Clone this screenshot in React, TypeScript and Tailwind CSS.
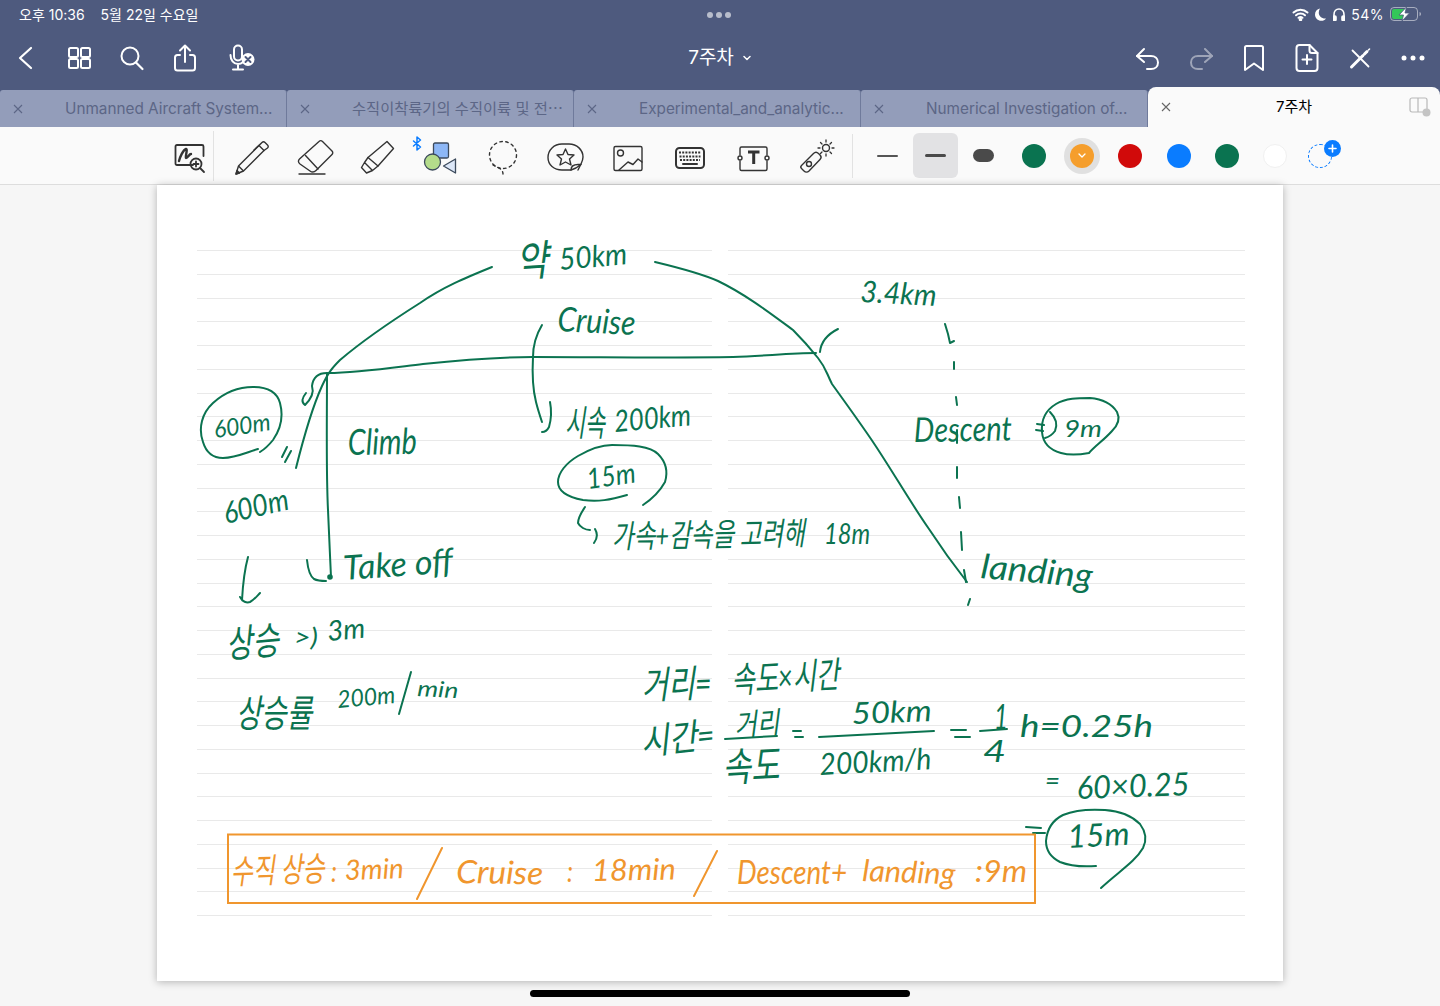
import React from 'react';

const GREEN = '#0b7350';
const ORANGE = '#f0962e';

type HandProps = {
  x: number;
  y: number;
  w: number;
  size: number;
  r?: number;
  children: string;
};

// one handwritten word on the note, x/y are the baseline start in screen coords
const Hand: React.FC<HandProps> = ({ x, y, w, size, r = 0, children }) => (
  <text
    x={x}
    y={y}
    textLength={w}
    lengthAdjust="spacingAndGlyphs"
    fontSize={size}
    transform={`rotate(${r} ${x} ${y})`}
  >
    {children}
  </text>
);

const inkStrokes = [
  // flight profile
  'M492 267C465 278 443 287 420 303C390 322 360 343 340 360C332 368 328 373 322 386C312 408 304 436 296 468',
  'M328 373C357 373 390 368 423 364C460 360 495 357 533 357C600 357 670 358 733 357C765 356 790 353 816 353',
  'M655 262C680 268 700 273 718 281C745 294 770 313 793 330C803 340 810 348 818 358C826 368 826 372 832 384C845 402 858 420 871 439C892 470 910 502 929 529C944 552 956 568 967 582',
  'M838 329C828 334 821 341 820 352',
  'M327 373C327 420 326 470 328 510C329 535 330 555 331 577',
  'M307 560C308 570 310 576 314 579C318 581 322 581 326 581',
  'M327 373C318 373 313 378 312 386C314 392 312 398 305 405C301 402 302 398 306 393',
  'M287 447L282 457M291 451L285 462',
  // circled times
  'M258 449C245 453 235 458 223 458C213 458 206 452 203 442C198 428 202 413 213 403C225 392 240 387 253 387C268 387 277 392 280 403C284 418 280 430 273 440C269 445 265 449 260 452',
  'M627 495C610 500 598 502 583 500C567 497 558 491 558 482C558 473 566 463 578 456C590 449 600 445 612 445C632 445 650 446 658 454C666 462 668 472 665 482C660 491 652 499 643 505',
  'M1089 453C1078 455 1068 455 1061 453C1050 450 1043 444 1042 432C1041 420 1046 410 1056 404C1066 398 1078 398 1090 398C1102 399 1112 404 1117 412C1120 418 1118 425 1112 431C1104 440 1095 446 1089 453',
  'M1050 412C1056 418 1058 424 1055 431C1052 435 1049 437 1045 438M1037 424L1044 425M1036 430L1043 431',
  'M1096 866C1082 867 1070 866 1060 862C1050 857 1046 850 1046 841C1047 829 1053 820 1063 815C1075 810 1090 809 1105 810C1120 811 1132 816 1140 824C1146 832 1147 840 1143 848C1135 862 1118 872 1101 888',
  'M1026 827L1041 828M1033 833L1045 833',
  // brackets and arrows
  'M542 325C536 335 533 345 533 357C532 375 533 390 536 402C538 410 540 416 542 422',
  'M550 402C552 412 551 420 549 427C547 431 545 432 542 432',
  'M585 507C581 513 578 518 578 523C580 527 585 530 590 530M595 529C598 534 597 539 594 543',
  'M248 557C245 568 243 582 242 600M240 597C242 602 247 603 250 602C254 600 257 596 260 593',
  'M945 324L948 334L950 343L954 341M954 362L954 369M956 397L957 405M957 430L957 443M957 467L957 478M959 497L960 508M961 532L962 550M964 570L966 582M970 599L968 605',
  // fractions
  'M411 672L399 714',
  'M725 739L777 736M819 737L934 731M980 731L1007 729',
  'M951 730L966 730M955 737L970 737M793 731L801 731M795 737L803 737',
];

const notes: Array<HandProps> = [
  { x: 517, y: 277, w: 32, size: 42, r: -4, children: '약' },
  { x: 560, y: 270, w: 68, size: 30, r: -5, children: '50km' },
  { x: 860, y: 302, w: 76, size: 30, r: 3, children: '3.4km' },
  { x: 557, y: 331, w: 78, size: 34, r: 3, children: 'Cruise' },
  { x: 348, y: 455, w: 69, size: 36, r: -1, children: 'Climb' },
  { x: 215, y: 438, w: 57, size: 24, r: -8, children: '600m' },
  { x: 226, y: 524, w: 66, size: 30, r: -13, children: '600m' },
  { x: 344, y: 580, w: 110, size: 34, r: -4, children: 'Take off' },
  { x: 565, y: 436, w: 40, size: 36, children: '시속' },
  { x: 615, y: 432, w: 77, size: 30, r: -5, children: '200km' },
  { x: 588, y: 489, w: 49, size: 28, r: -8, children: '15m' },
  { x: 612, y: 548, w: 193, size: 32, r: -1, children: '가속+감속을 고려해' },
  { x: 824, y: 544, w: 46, size: 28, children: '18m' },
  { x: 914, y: 442, w: 98, size: 34, r: -1, children: 'Descent' },
  { x: 1064, y: 437, w: 38, size: 24, children: '9m' },
  { x: 980, y: 578, w: 112, size: 34, r: 5, children: 'landing' },
  { x: 227, y: 658, w: 53, size: 38, r: -5, children: '상승' },
  { x: 294, y: 646, w: 24, size: 26, children: '>)' },
  { x: 328, y: 641, w: 38, size: 28, r: -5, children: '3m' },
  { x: 236, y: 727, w: 76, size: 38, children: '상승률' },
  { x: 338, y: 708, w: 58, size: 24, r: -5, children: '200m' },
  { x: 417, y: 696, w: 41, size: 22, r: 3, children: 'min' },
  { x: 642, y: 699, w: 70, size: 38, r: -2, children: '거리=' },
  { x: 732, y: 693, w: 108, size: 36, r: -3, children: '속도×시간' },
  { x: 642, y: 755, w: 74, size: 36, r: -6, children: '시간=' },
  { x: 735, y: 736, w: 45, size: 30, r: -4, children: '거리' },
  { x: 723, y: 782, w: 57, size: 40, r: -3, children: '속도' },
  { x: 852, y: 724, w: 80, size: 30, r: -2, children: '50km' },
  { x: 820, y: 775, w: 112, size: 30, r: -3, children: '200km/h' },
  { x: 994, y: 729, w: 14, size: 34, children: '1' },
  { x: 983, y: 762, w: 23, size: 30, children: '4' },
  { x: 1020, y: 737, w: 133, size: 30, children: 'h=0.25h' },
  { x: 1045, y: 790, w: 15, size: 26, children: '=' },
  { x: 1077, y: 799, w: 113, size: 32, r: -2, children: '60×0.25' },
  { x: 1068, y: 848, w: 62, size: 32, r: -3, children: '15m' },
];

const summary: Array<HandProps> = [
  { x: 231, y: 884, w: 94, size: 34, r: -2, children: '수직 상승' },
  { x: 331, y: 882, w: 6, size: 28, children: ':' },
  { x: 345, y: 880, w: 59, size: 28, r: -2, children: '3min' },
  { x: 456, y: 883, w: 87, size: 32, r: 1, children: 'Cruise' },
  { x: 567, y: 882, w: 6, size: 28, children: ':' },
  { x: 592, y: 881, w: 84, size: 30, r: -1, children: '18min' },
  { x: 737, y: 884, w: 110, size: 32, children: 'Descent+' },
  { x: 862, y: 881, w: 93, size: 30, r: 2, children: 'landing' },
  { x: 975, y: 882, w: 52, size: 30, children: ':9m' },
];

const Icon: React.FC<{ size?: number; className?: string; children: React.ReactNode }> = ({ size = 28, className = '', children }) => (
  <svg width={size} height={size} viewBox={`0 0 ${size} ${size}`} fill="none" stroke="currentColor" strokeWidth="2" strokeLinecap="round" strokeLinejoin="round" className={`overflow-visible ${className}`}>
    {children}
  </svg>
);

const navLeft = [
  <path key="back" d="M19 4L8 14L19 24" strokeWidth="2.2" />,
  <g key="grid">
    <rect x="4" y="4" width="9" height="9" rx="1.5" />
    <rect x="16" y="4" width="9" height="9" rx="1.5" />
    <rect x="4" y="15" width="9" height="9" rx="1.5" />
    <rect x="16" y="15" width="9" height="9" rx="1.5" />
  </g>,
  <g key="search">
    <circle cx="12" cy="12" r="8.5" />
    <path d="M18 18.5L24.5 25" strokeWidth="2.2" />
  </g>,
  <g key="share">
    <path d="M9 11H6.5C5 11 4 12 4 13.500V24C4 25.500 5 26.500 6.500 26.500H21.500C23 26.500 24 25.500 24 24V13.500C24 12 23 11 21.500 11H19" />
    <path d="M14 18V2M9 6.500L14 1.500L19 6.500" />
  </g>,
  <g key="mic" transform="translate(6 0)">
    <rect x="4" y="1.500" width="8" height="15" rx="4" />
    <path d="M0.500 11C0.500 16 3.500 20 8 20C10 20 11.500 19.500 12.500 18.500M8 20V25M3 25.500H13" />
    <circle cx="18" cy="15.500" r="6.500" fill="#fff" stroke="none" />
    <path d="M15.500 13L20.500 18M20.500 13L15.500 18" stroke="#4e5a7e" />
  </g>,
];

const navRight = [
  <g key="undo">
    <path d="M10 5L3 12L10 18" />
    <path d="M3 12H17C21 12 24 14.500 24 18.500C24 22.500 21 25 17 25H13" />
  </g>,
  <g key="redo" className="opacity-45">
    <path d="M18 5L25 12L18 18" />
    <path d="M25 12H11C7 12 4 14.500 4 18.500C4 22.500 7 25 11 25H15" />
  </g>,
  <path key="bookmark" d="M5 3.500C5 2.500 5.500 2 6.500 2H21.500C22.500 2 23 2.500 23 3.500V26L14 19.500L5 26Z" />,
  <g key="addpage">
    <path d="M16.500 1H6.500C4.500 1 3.500 2 3.500 4V24C3.500 26 4.500 27 6.500 27H21.500C23.500 27 24.500 26 24.500 24V9Z" />
    <path d="M16.500 1V6.500C16.500 8 17.500 9 19 9H24.500M14 11V20M9.500 15.500H18.500" />
  </g>,
  <g key="tools">
    <path d="M6.500 6.500L22.500 22.500" strokeWidth="1.800" />
    <path d="M5.500 23L17 11.500" strokeWidth="3" />
    <path d="M18.500 10L21 7.500" strokeWidth="3" />
    <path d="M22.500 6L23.500 5" strokeWidth="1.600" />
  </g>,
  <g key="more" fill="currentColor" stroke="none">
    <circle cx="5" cy="14" r="2.500" />
    <circle cx="14" cy="14" r="2.500" />
    <circle cx="23" cy="14" r="2.500" />
  </g>,
];

const tabs = [
  'Unmanned Aircraft System...',
  '수직이착륙기의 수직이륙 및 전⋯',
  'Experimental_and_analytic...',
  'Numerical Investigation of...',
];

const tools = [
  <g key="pen">
    <path d="M4 37L6.500 29L27 8.500L32 13.500L11.500 34Z" />
    <path d="M27 8.500L30 5.500C31 4.500 32 4.500 33 5.500L35.500 8C36.500 9 36.500 10 35.500 11L32 13.500M7 29.500L11 33.500M30 5.500L22 13" />
    <path d="M4 37L5 33.500L7.500 36Z" fill="#333" />
  </g>,
  <g key="eraser">
    <path d="M24 4.500C25 3.500 26.500 3.500 27.500 4.500L37 14C38 15 38 16.500 37 17.500L21 33.500C19 35.500 17 35.500 15 34L5 27C3 25.500 3 23.500 4.500 22Z" />
    <path d="M10.500 18.500L23 32" />
    <path d="M4 37H30" />
  </g>,
  <g key="marker">
    <path d="M30 4.500L36.500 11.500L21 29L11 20.500Z" />
    <path d="M11 20.500L7.500 25.500L15.500 33.500L21 29M7.500 25.500L4.500 30.500L9.500 36L15.500 33.500" />
  </g>,
  <g key="shapes" stroke="#3c4a5c" strokeWidth="1.300" transform="translate(-2.500 0)">
    <rect x="16" y="6" width="15" height="15" rx="1.500" fill="#8db7f6" />
    <circle cx="15" cy="25" r="8" fill="#b4dc8b" />
    <path d="M38 22L26 29L38 36Z" fill="#dce7f8" />
    <path d="M-4 4L3 10L-0.500 13V0L3 3L-4 9" stroke="#0a7cff" strokeWidth="1.500" />
  </g>,
  <g key="lasso" strokeDasharray="2.500 3.500">
    <circle cx="20" cy="18" r="13.500" />
    <path d="M10 28C13 30 20 31 20 37" />
  </g>,
  <g key="sticker">
    <path d="M26 33H17C9 33 3 28 3 20.500C3 13 9 7 17 7H24C32 7 38 13 38 20C38 23 37 25 36 27L33 33" />
    <path d="M26 33C26 29 28 27.500 33 27.500H36C33 30 30 32 26 33Z" />
    <path d="M20.500 12L23 17.500L29 18L24.500 22L26 28L20.500 25L15 28L16.500 22L12 18L18 17.500Z" />
  </g>,
  <g key="image">
    <rect x="6" y="9.500" width="28" height="24" rx="1.500" />
    <circle cx="12.500" cy="16" r="3" />
    <path d="M11 33L20 25L25 27.500L30 22L34 25" />
  </g>,
  <g key="keyboard">
    <rect x="6" y="11" width="28" height="20" rx="3.500" strokeWidth="2" />
    <path d="M9 15.500H31M9.500 19.500H30.500M10 23H30" strokeDasharray="2 1.200" strokeLinecap="butt" strokeWidth="2" />
    <path d="M13 27H27" strokeWidth="2" />
  </g>,
  <g key="textbox">
    <path d="M7 18V11.500C7 10.500 7.500 10 8.500 10H32.500C33.500 10 34 10.500 34 11.500V18M7 24V32C7 33 7.500 33.500 8.500 33.500H32.500C33.500 33.500 34 33 34 32V24" />
    <circle cx="7" cy="21" r="2" />
    <circle cx="34" cy="21" r="2" />
    <path d="M15 15H26.500M20.700 15V27" strokeWidth="3" strokeLinecap="butt" />
  </g>,
  <g key="laser">
    <path d="M5.500 28.500L17.500 16.500C19 15 21 15 22.500 16.500L24 18C25.500 19.500 25.500 21 24 22.500L13 34C11.500 35.500 9.500 35.500 8 34L5.500 31.500C4.500 30.500 4.500 29.500 5.500 28.500Z" />
    <circle cx="13" cy="27" r="2.500" />
    <circle cx="30" cy="11" r="3.500" />
    <path d="M30 3V5M30 17V19M22 11H24M36 11H38M24.500 5.500L26 7M34 15L35.500 16.500M35.500 5.500L34 7M26 15L24.500 16.500" strokeWidth="1.300" />
  </g>,
];

const colors = ['bg-[#0a7350]', 'bg-[#f59e2c]', 'bg-[#d10a0a]', 'bg-[#0a7cff]', 'bg-[#0a7350]', 'bg-white'];

const App: React.FC = () => {
  return (
    <div className="relative w-[1440px] h-[1006px] overflow-hidden flex flex-col bg-[#f6f6f6] font-['Inter','Noto_Sans_CJK_KR',sans-serif]">
      <header className="bg-[#4e5a7e] text-white">
        <div className="relative h-[28px] pl-[19px] pr-[18px] flex items-center justify-between text-[14px]">
          <div className="flex gap-[16px]">
            <span>오후 10:36</span>
            <span>5월 22일 수요일</span>
          </div>
          <div className="absolute left-[707px] top-[12px] flex gap-[3px]">
            <span className="w-[6px] h-[6px] rounded-full bg-white/60" />
            <span className="w-[6px] h-[6px] rounded-full bg-white/60" />
            <span className="w-[6px] h-[6px] rounded-full bg-white/60" />
          </div>
          <div className="flex items-center gap-[6px]">
            <svg width="17" height="13" viewBox="0 0 17 13" fill="none" stroke="white" strokeWidth="2" strokeLinecap="round">
              <path d="M1.500 4.500C5.500 0.800 11.500 0.800 15.500 4.500M4 7.300C6.500 5 10.500 5 13 7.300M6.500 9.800C7.500 9 9.500 9 10.500 9.800" />
              <circle cx="8.500" cy="11.500" r="0.800" fill="white" />
            </svg>
            <svg width="11" height="13" viewBox="0 0 11 13" fill="white">
              <path d="M5 0.500C2 1 0 3.500 0 6.500C0 10 2.800 12.800 6.300 12.800C8.300 12.800 10 11.900 11 10.500C7 11 3.500 8 3.800 4.200C3.900 2.800 4.300 1.500 5 0.500Z" />
            </svg>
            <svg width="12" height="13" viewBox="0 0 12 13" fill="none" stroke="white" strokeWidth="1.600" className="ml-[1px]">
              <path d="M1 11V6.500C1 3.300 3 1 6 1C9 1 11 3.300 11 6.500V11" />
              <rect x="0.500" y="8" width="2.500" height="4.500" rx="1" fill="white" />
              <rect x="9" y="8" width="2.500" height="4.500" rx="1" fill="white" />
            </svg>
            <span className="tracking-[0.5px]">54%</span>
            <svg width="32" height="14" viewBox="0 0 32 14" fill="none">
              <rect x="0.500" y="0.500" width="27" height="13" rx="3.500" stroke="white" strokeOpacity="0.5" />
              <rect x="2" y="2" width="13" height="10" rx="2" fill="#34c759" />
              <path d="M29.500 5V9C30.500 8.700 31 8 31 7C31 6 30.500 5.300 29.500 5Z" fill="white" fillOpacity="0.5" />
              <path d="M16.500 0L9 8H13.500L12 14L19.500 6H15Z" fill="white" stroke="#4e5a7e" strokeWidth="0.800" />
            </svg>
          </div>
        </div>

        <div className="h-[62px] pl-[12px] pr-[13px] pb-[2px] flex items-center">
          <div className="flex-1 flex gap-[25px]">
            {navLeft.map((icon, i) => (
              <Icon key={i}>{icon}</Icon>
            ))}
          </div>
          <div className="flex items-center gap-[9px] text-[19px]">
            <span>7주차</span>
            <svg width="8" height="6" viewBox="0 0 8 6" fill="none" stroke="white" strokeWidth="1.500" strokeLinecap="round" strokeLinejoin="round">
              <path d="M1 1.500L4 4.500L7 1.500" />
            </svg>
          </div>
          <div className="flex-1 flex justify-end gap-[25px]">
            {navRight.map((icon, i) => (
              <Icon key={i}>{icon}</Icon>
            ))}
          </div>
        </div>
      </header>

      <div className="relative h-[37px] flex bg-[#4e5a7e]">
        {tabs.map((title) => (
          <div key={title} className="w-[287px] shrink-0 flex items-center rounded-t-[3px] border-r border-[#6f7a9b] bg-[#939dba] text-[#5c6686]">
            <svg width="10" height="10" viewBox="0 0 10 10" fill="none" stroke="currentColor" strokeWidth="1.100" className="ml-[13px] mr-[42px]">
              <path d="M1 1L9 9M9 1L1 9" />
            </svg>
            <span className="pt-[2px] text-[15.300px] whitespace-nowrap">{title}</span>
          </div>
        ))}
        <div className="absolute left-[1148px] right-0 top-[-3px] bottom-0 rounded-t-[8px] bg-[#fafafa] flex items-center text-black">
          <svg width="10" height="10" viewBox="0 0 10 10" fill="none" stroke="#666" strokeWidth="1.100" className="ml-[13px]">
            <path d="M1 1L9 9M9 1L1 9" />
          </svg>
          <span className="ml-[105px] text-[15px]">7주차</span>
          <svg width="22" height="20" viewBox="0 0 22 20" fill="none" stroke="#b8b8b8" strokeWidth="1.200" className="ml-auto mr-[9px]">
            <rect x="1" y="1" width="17" height="14" rx="2" />
            <path d="M9 1V15" />
            <circle cx="17.500" cy="15.500" r="4" fill="#c4c4c4" stroke="none" />
          </svg>
        </div>
      </div>

      <div className="h-[58px] shrink-0 flex items-center pl-[169px] bg-[#fafafa] border-b border-[#dddddd] text-[#333333]">
        <svg width="40" height="40" viewBox="0 0 40 40" fill="none" stroke="#333" strokeWidth="1.800" strokeLinecap="round" strokeLinejoin="round" className="shrink-0 translate-y-[1px]">
          <path d="M24 28H8C7 28 6.500 27.500 6.500 26.500V9.500C6.500 8.500 7 8 8 8H33C34 8 34.500 8.500 34.500 9.500V19" />
          <path d="M10 24C11 20 14 13 17 12C19 12 16 20 17 21C19 21 20 17 22 17" strokeWidth="2.400" />
          <circle cx="27" cy="27" r="5.500" />
          <path d="M31 31L35 35M27 24.500V29.500M24.500 27H29.500" />
        </svg>
        <div className="w-px h-[50px] ml-[4px] mr-[7px] bg-[#e2e2e2]" />
        {tools.map((tool, i) => (
          <div key={i} className="w-[62.600px] shrink-0 flex justify-center">
            <svg width="40" height="40" viewBox="0 0 40 40" fill="none" stroke="#333" strokeWidth="1.400" strokeLinecap="round" strokeLinejoin="round" className="overflow-visible translate-y-[1px]">
              {tool}
            </svg>
          </div>
        ))}
        <div className="w-px h-[44px] ml-[5px] mr-[12px] bg-[#e2e2e2]" />
        <div className="w-[45px] h-[45px] mr-[3px] flex items-center justify-center">
          <span className="w-[21px] h-[2px] rounded-full bg-[#555555]" />
        </div>
        <div className="w-[45px] h-[45px] mr-[3.500px] rounded-[6px] bg-[#e2e2e4] flex items-center justify-center">
          <span className="w-[21px] h-[3.500px] rounded-full bg-[#4a4a4a]" />
        </div>
        <div className="w-[45px] h-[45px] flex items-center justify-center">
          <span className="w-[21px] h-[13px] rounded-full bg-[#4a4a4a]" />
        </div>
        <div className="ml-[3.500px] flex">
          {colors.map((c, i) => (
            <div key={i} className="w-[48.200px] flex items-center justify-center">
              {i === 1 ? (
                <span className="w-[36px] h-[36px] rounded-full bg-[#e0e0e0] flex items-center justify-center">
                  <span className={`w-[24px] h-[24px] rounded-full flex items-center justify-center ${c}`}>
                    <svg width="8" height="5" viewBox="0 0 8 5" fill="none" stroke="white" strokeWidth="1.300" strokeLinecap="round" strokeLinejoin="round">
                      <path d="M1 1L4 4L7 1" />
                    </svg>
                  </span>
                </span>
              ) : (
                <span className={`w-[24px] h-[24px] rounded-full ${c} ${c === 'bg-white' ? 'border border-[#f0f0f0]' : ''}`} />
              )}
            </div>
          ))}
        </div>
        <div className="relative ml-[9px] w-[24px] h-[24px]">
          <span className="block w-[24px] h-[24px] rounded-full border border-dashed border-[#0a7cff]" />
          <span className="absolute right-[-8.500px] top-[-3.500px] w-[17px] h-[17px] rounded-full bg-[#0a7cff] flex items-center justify-center">
            <svg width="9" height="9" viewBox="0 0 9 9" stroke="white" strokeWidth="1.600" strokeLinecap="round">
              <path d="M4.500 1V8M1 4.500H8" />
            </svg>
          </span>
        </div>
      </div>

      <main className="flex-1 flex justify-center items-start">
        <div className="relative w-[1126px] h-[796px] bg-white shadow-[0_1px_8px_rgba(0,0,0,0.28)]">
          <div className="pt-[65px] px-[40px] grid grid-cols-[515px_517px] gap-x-[16px]">
            {[0, 1].map((col) => (
              <div key={col}>
                {Array.from({ length: 29 }, (_, i) => (
                  <div key={i} className="h-[23.750px] border-t border-[#e9e9e9]" />
                ))}
              </div>
            ))}
          </div>
          <svg
            viewBox="157 185 1126 796"
            className="absolute inset-0 w-full h-full font-['Lato','Noto_Sans_CJK_KR',sans-serif] italic"
            fill="none"
            strokeLinecap="round"
            strokeLinejoin="round"
          >
            <g stroke={GREEN} strokeWidth="2">
              {inkStrokes.map((d) => (
                <path key={d} d={d} />
              ))}
              <circle cx="330" cy="577" r="1.800" fill={GREEN} />
            </g>
            <g fill={GREEN}>
              {notes.map((n, i) => (
                <Hand key={i} {...n} />
              ))}
            </g>
            <g stroke={ORANGE} strokeWidth="2">
              <rect x="228" y="834.500" width="807" height="68.500" strokeLinejoin="miter" />
              <path d="M442 848L417 899M717 851L694 896" />
            </g>
            <g fill={ORANGE}>
              {summary.map((n, i) => (
                <Hand key={i} {...n} />
              ))}
            </g>
          </svg>
        </div>
      </main>

      <div className="absolute left-[530px] top-[990px] w-[380px] h-[7px] rounded-full bg-black" />
    </div>
  );
};

export default App;
